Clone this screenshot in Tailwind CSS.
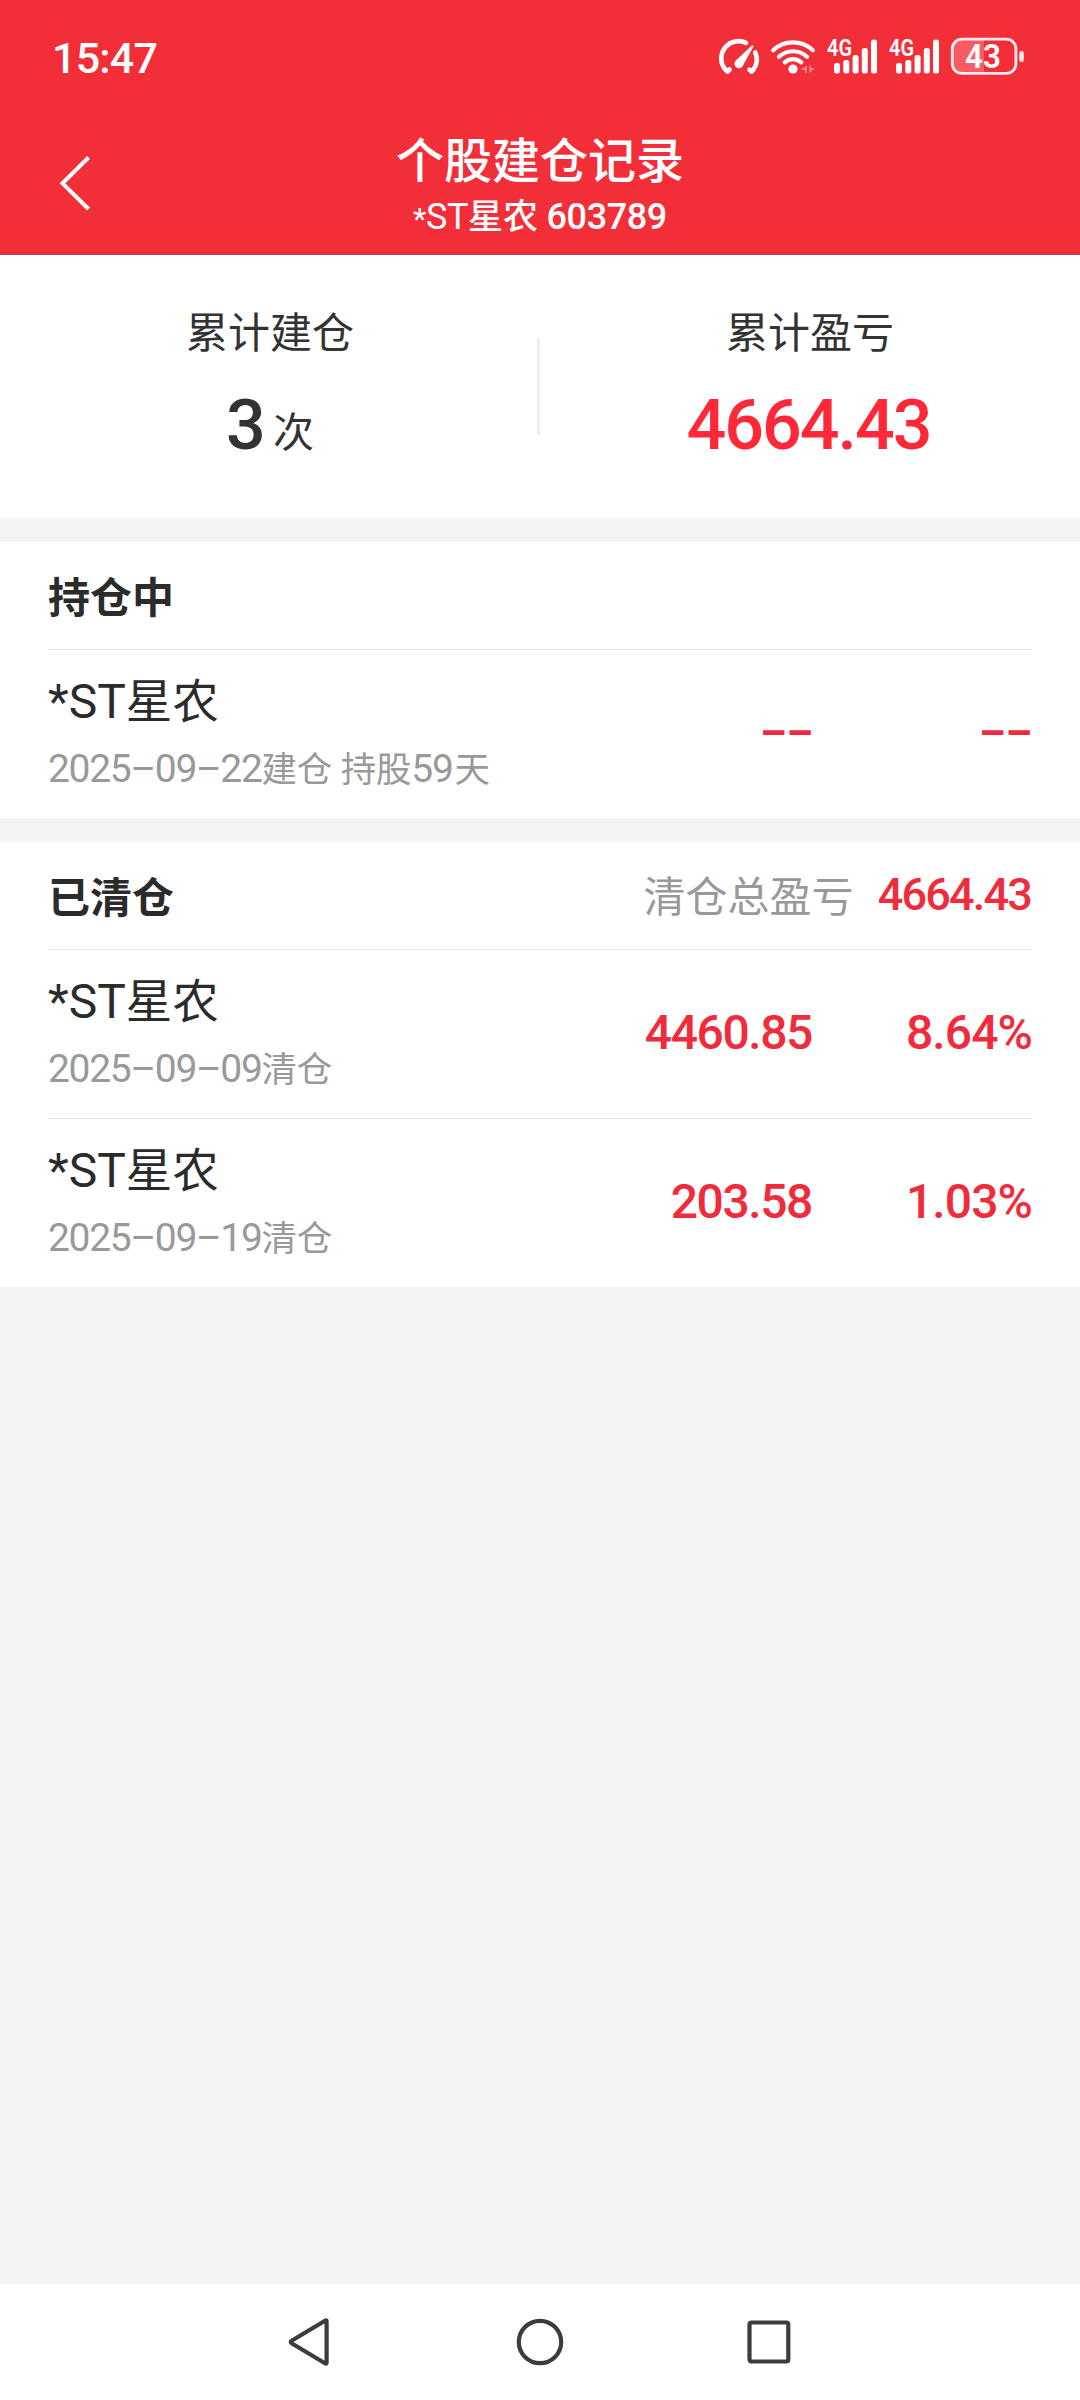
<!DOCTYPE html>
<html lang="zh-CN">
<head>
    <meta charset="UTF-8">
    <meta name="viewport" content="width=device-width, initial-scale=1.0">
    <title>个股建仓记录</title>
    <script src="https://cdn.jsdelivr.net/npm/@tailwindcss/browser@4"></script>
</head>
<body class="bg-[#f4f4f4] font-['Roboto','Noto_Sans_CJK_SC',sans-serif] text-[#2b2b2b]">
    <div class="flex flex-col w-[1080px] h-[2400px] overflow-hidden">

        <header class="h-[255px] bg-[#f22f38] text-white border-b border-[#a8474d]">
            <!-- Status bar -->
            <div class="flex items-center h-[112px] pl-[52px] pr-[53px]">
                <span class="mr-auto pt-1 text-[43px] leading-none font-medium tracking-[-0.8px]">15:47</span>
                <svg class="w-[44px] h-[40px] mr-[7px]" viewBox="718 36 44 40" fill="none" stroke="white" stroke-width="4.6" stroke-linecap="round" stroke-linejoin="round">
                    <path d="M746 42.8A17.3 17.3 0 0 0 724.5 68.5L727.5 71.5L729.5 69.5"/>
                    <path d="M755.2 52.5A17.3 17.3 0 0 1 753.5 69.5L751.5 71.5L749.5 69.8"/>
                    <path d="M752.2 45.2L736.6 59.8A4.6 4.6 0 1 0 743.6 64.2L753.6 46.2Z" fill="white" stroke="none"/>
                </svg>
                <svg class="w-[48px] h-[40px] mr-[8px]" viewBox="769 36 48 40" fill="none" stroke="white" stroke-width="4.2" stroke-linecap="round">
                    <path d="M773.2 50.2A29 29 0 0 1 812.8 50.2"/>
                    <path d="M779 56.8A20.5 20.5 0 0 1 807 56.8"/>
                    <path d="M784.8 62.4A12 12 0 0 1 801.2 62.4"/>
                    <circle cx="793" cy="69" r="4.6" fill="white" stroke="none"/>
                    <path d="M807 65.5V73H805V70H800.5ZM809.3 73V65.5H811V68H815Z" fill="white" fill-opacity=".4" stroke="none"/>
                </svg>
                <svg class="w-[54px] h-[40px] mr-[8px]" viewBox="825 36 54 40" fill="white">
                    <text x="827" y="56.4" font-size="23" font-weight="600" textLength="25" lengthAdjust="spacingAndGlyphs">4G</text>
                    <rect x="834" y="63" width="6" height="10.5" rx="2.5"/>
                    <rect x="843.3" y="60" width="6" height="13.5" rx="2.5"/>
                    <rect x="852.6" y="55" width="6" height="18.5" rx="2.5"/>
                    <rect x="861.8" y="48" width="6" height="25.5" rx="2.5"/>
                    <rect x="871" y="39.5" width="6" height="34" rx="2.5"/>
                </svg>
                <svg class="w-[54px] h-[40px] mr-[8px]" viewBox="825 36 54 40" fill="white">
                    <text x="827" y="56.4" font-size="23" font-weight="600" textLength="25" lengthAdjust="spacingAndGlyphs">4G</text>
                    <rect x="834" y="63" width="6" height="10.5" rx="2.5"/>
                    <rect x="843.3" y="60" width="6" height="13.5" rx="2.5"/>
                    <rect x="852.6" y="55" width="6" height="18.5" rx="2.5"/>
                    <rect x="861.8" y="48" width="6" height="25.5" rx="2.5"/>
                    <rect x="871" y="39.5" width="6" height="34" rx="2.5"/>
                </svg>
                <svg class="w-[78px] h-[40px]" viewBox="949 36 78 40" fill="white">
                    <path d="M962 40H984V73H962Q953 73 953 64V49Q953 40 962 40Z" fill-opacity=".22"/>
                    <rect x="952.3" y="39.2" width="63.6" height="34.2" rx="9.5" fill="none" stroke="white" stroke-opacity=".9" stroke-width="2.8"/>
                    <rect x="1019.2" y="51" width="4.6" height="11" rx="2" fill-opacity=".9"/>
                    <text x="965" y="67.8" font-size="33" font-weight="600" textLength="36" lengthAdjust="spacingAndGlyphs">43</text>
                </svg>
            </div>
            <!-- Title bar -->
            <div class="grid grid-cols-[140px_1fr_140px] pt-[17px]">
                <svg class="w-[40px] h-[60px] ml-[55px] mt-[24px]" viewBox="55 153 40 60" fill="none" stroke="white" stroke-width="4">
                    <path d="M88.5 157.5L62.5 183.3L88.5 209"/>
                </svg>
                <div class="text-center pt-[2px]">
                    <h1 class="text-[48px] leading-[62px] font-medium">个股建仓记录</h1>
                    <p class="text-[36px] leading-[49px] tracking-[-0.4px]"><span class="text-[30px] font-medium">*</span>ST<span class="text-[35px] font-medium tracking-normal">星农</span> <span class="font-medium">603789</span></p>
                </div>
            </div>
        </header>

        <!-- Summary -->
        <section class="flex h-[263px] bg-white pt-[49px] text-center text-[#333]">
            <div class="w-[540px]">
                <p class="text-[42px] leading-[60px]">累计建仓</p>
                <p class="leading-[122px]"><span class="text-[70px] font-medium">3</span><span class="relative -top-[2px] text-[41px] ml-[7px]">次</span></p>
            </div>
            <div class="w-[3px] h-[96px] -ml-[3px] mt-[34px] bg-[#eee]"></div>
            <div class="w-[537px]">
                <p class="pl-[3px] text-[42px] leading-[60px]">累计盈亏</p>
                <p class="text-[70px] leading-[122px] font-medium tracking-[-2px] text-[#ff2838]">4664.43</p>
            </div>
        </section>

        <!-- Holding -->
        <section class="mt-6 px-[48px] bg-white">
            <div class="flex items-center h-[108px] border-b border-[#e8e8e8]">
                <h2 class="pt-[5px] text-[42px] font-bold">持仓中</h2>
            </div>
            <div class="flex items-center h-[168px]">
                <div class="flex-1 pt-0.5">
                    <p class="text-[48px] leading-[67px]">*ST<span class="text-[46.5px]">星农</span></p>
                    <p class="text-[39px] leading-[66px] tracking-[-1.3px] text-[#999]">2025–09–22<span class="text-[35.5px] tracking-[-0.2px]">建仓 持股</span>59<span class="ml-0.5 text-[35.5px]">天</span></p>
                </div>
                <p class="w-[220px] pb-[2px] text-right text-[42px] font-bold text-[#f02c3c]">––</p>
                <p class="w-[219px] pb-[2px] text-right text-[42px] font-bold text-[#f02c3c]">––</p>
            </div>
        </section>

        <!-- Closed -->
        <section class="mt-6 px-[48px] bg-white">
            <div class="flex items-center h-[108px] border-b border-[#e8e8e8]">
                <h2 class="mr-auto pt-[5px] text-[42px] font-bold">已清仓</h2>
                <span class="pt-[3px] text-[42px] text-[#999]">清仓总盈亏</span>
                <span class="ml-[24px] pr-px pb-[2px] text-[45px] font-medium tracking-[-1.8px] text-[#f02c3c]">4664.43</span>
            </div>
            <div class="flex items-center h-[169px] border-b border-[#e8e8e8]">
                <div class="flex-1 pt-0.5">
                    <p class="text-[48px] leading-[67px]">*ST<span class="text-[46.5px]">星农</span></p>
                    <p class="text-[39px] leading-[66px] tracking-[-1.3px] text-[#999]">2025–09–09<span class="text-[35.5px] tracking-[-0.3px]">清仓</span></p>
                </div>
                <p class="w-[220px] pr-px pb-[2px] text-right text-[48px] font-medium tracking-[-1.4px] text-[#f02c3c]">4460.85</p>
                <p class="w-[219px] pb-[2px] text-right text-[48px] font-medium tracking-[-0.9px] text-[#f02c3c]">8.64%</p>
            </div>
            <div class="flex items-center h-[168px]">
                <div class="flex-1 pt-0.5">
                    <p class="text-[48px] leading-[67px]">*ST<span class="text-[46.5px]">星农</span></p>
                    <p class="text-[39px] leading-[66px] tracking-[-1.3px] text-[#999]">2025–09–19<span class="text-[35.5px] tracking-[-0.3px]">清仓</span></p>
                </div>
                <p class="w-[220px] pr-px pb-[2px] text-right text-[48px] font-medium tracking-[-1.4px] text-[#f02c3c]">203.58</p>
                <p class="w-[219px] pb-[2px] text-right text-[48px] font-medium tracking-[-0.9px] text-[#f02c3c]">1.03%</p>
            </div>
        </section>

        <!-- System navigation -->
        <nav class="flex items-center justify-center gap-[182px] h-[116px] mt-auto bg-white">
            <svg class="w-[48px] h-[48px]" viewBox="0 0 48 48" fill="none" stroke="#3c3c3c" stroke-width="4.2" stroke-linejoin="round">
                <path d="M40.6 3.2Q40.6 1.8 39 2.8L5.6 22.8Q3.8 24 5.6 25.2L39 45.2Q40.6 46.2 40.6 44.8Z"/>
            </svg>
            <svg class="w-[48px] h-[48px]" viewBox="0 0 48 48" fill="none" stroke="#3c3c3c" stroke-width="4.2">
                <circle cx="24" cy="24" r="21.2"/>
            </svg>
            <svg class="w-[48px] h-[48px]" viewBox="0 0 48 48" fill="none" stroke="#3c3c3c" stroke-width="4.2">
                <rect x="3.5" y="4.5" width="38.8" height="39" rx="2"/>
            </svg>
        </nav>
    </div>
</body>
</html>
